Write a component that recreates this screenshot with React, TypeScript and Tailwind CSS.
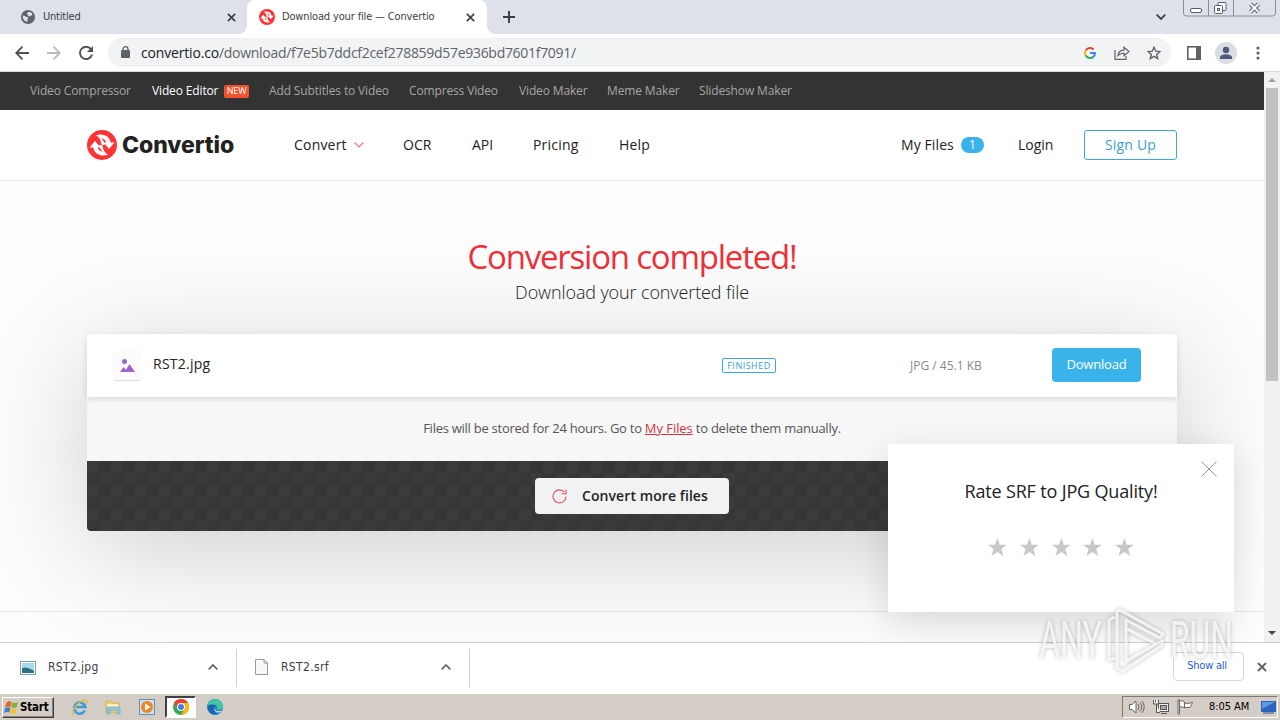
import type { ReactNode } from 'react';

const promoLinks = [
  { label: 'Video Compressor', width: 'w-[102px]' },
  { label: 'Video Editor', width: 'w-[97px]', isNew: true },
  { label: 'Add Subtitles to Video', width: 'w-[120px]' },
  { label: 'Compress Video', width: 'w-[90px]' },
  { label: 'Video Maker', width: 'w-[68px]' },
  { label: 'Meme Maker', width: 'w-[72px]' },
  { label: 'Slideshow Maker', width: 'w-[93px]' },
];

function CloseIcon({ className }: { className: string }) {
  return (
    <svg viewBox="0 0 10 10" className={className} fill="none" stroke="currentColor" strokeWidth="1.9">
      <path d="M1 1l8 8M9 1L1 9" />
    </svg>
  );
}

function ConvertioMark({ className }: { className: string }) {
  const arrow = 'M9 5.200C16 3 22.500 6 23.800 12.500H27.500L22 19 16.500 12.500H19.300C18.500 10 16.500 8.500 14 8.200c2.500 2 3.600 4.200 3.600 7l-3.200-.7C14.200 10.500 12.500 7.500 9 5.200z';
  return (
    <svg viewBox="0 0 30 30" className={className}>
      <circle cx="15" cy="15" r="15" fill="#ff3333" />
      <path fill="#fff" d={arrow} />
      <path fill="#fff" d={arrow} transform="rotate(180 15 15)" />
    </svg>
  );
}

function TabStrip() {
  return (
    <div className="flex h-[34px] shrink-0 bg-[#dee1e9] font-['DejaVu_Sans_Condensed','DejaVu_Sans',sans-serif] text-[11px] text-[#3c4043]">
      <div className="flex w-[247px] items-center pl-[21px] pr-[11px]">
        <svg viewBox="0 0 14 14" className="size-[14px]">
          <circle cx="7" cy="7" r="7" fill="#5f6368" />
          <path fill="#dee1e9" d="M2 5.500c2 .1 2.500 1.500 4 1.500 1.200 0 1.500 1 .9 1.700-.8.700 0 1.300-.4 3C3.500 11.800 1.300 8.800 2 5.500zM7 2.300c1.500-.8 3.800.3 4.600 1.900-.8.300-.6 1.500-1.700 1.500-.7 0-.8 1-1.800.7C6.900 6 7.500 5 6.500 4.600 5.600 4.200 6 2.800 7 2.300z" />
        </svg>
        <span className="ml-[8px] grow whitespace-nowrap tracking-[-0.200px]">Untitled</span>
        <CloseIcon className="size-[9px]" />
      </div>
      <div className="relative flex w-[240px] items-center rounded-t-[8px] bg-white pl-[12px] pr-[12px]">
        <div className="absolute bottom-0 -left-[8px] size-[8px] bg-[radial-gradient(circle_at_0_0,transparent_7.500px,white_8px)]" />
        <div className="absolute bottom-0 -right-[8px] size-[8px] bg-[radial-gradient(circle_at_100%_0,transparent_7.500px,white_8px)]" />
        <ConvertioMark className="size-4" />
        <span className="ml-[7px] grow whitespace-nowrap tracking-[-0.150px]">Download your file — Convertio</span>
        <CloseIcon className="size-[9px]" />
      </div>
      <div className="flex grow items-center pl-[16px]">
        <svg viewBox="0 0 12 12" className="size-3" stroke="#3c4043" strokeWidth="2">
          <path d="M6 0v12M0 6h12" />
        </svg>
      </div>
      <div className="flex items-center pr-[17px]">
        <svg viewBox="0 0 10 6" className="size-[10px]" fill="none" stroke="#3c4043" strokeWidth="1.800">
          <path d="M.7.700L5 5 9.300.700" />
        </svg>
      </div>
      <svg viewBox="0 0 93 17" className="mr-1 h-[17px] w-[93px]" fill="none" stroke="#8a8e96">
        <path d="M.5 0v13q0 3 3 3h86q3 0 3-3V0M25.500 0v16M50.500 0v16" />
        <g stroke="#555b66">
          <rect x="7.500" y="8.500" width="11" height="4" rx="1.500" fill="#fff" />
          <rect x="35" y="2.500" width="8" height="8" rx="1" fill="#fff" />
          <rect x="31.500" y="5.500" width="8" height="8" rx="1" fill="#fff" />
          <rect x="34.500" y="8.500" width="2" height="2" />
        </g>
        <path d="M67.500 4l8 8M75.500 4l-8 8" stroke="#555b66" strokeWidth="4" />
        <path d="M67.500 4l8 8M75.500 4l-8 8" stroke="#fff" strokeWidth="2" />
      </svg>
    </div>
  );
}

function Toolbar() {
  return (
    <div className="flex h-[38px] shrink-0 items-center border-b border-[#d5d7da] bg-white">
      <svg viewBox="0 0 14 14" className="ml-[15px] size-[14px]" fill="none" stroke="#4d5156" strokeWidth="1.800">
        <path d="M14 7H1.500M7.500.7L1.200 7l6.300 6.300" />
      </svg>
      <svg viewBox="0 0 14 14" className="ml-[18px] size-[14px]" fill="none" stroke="#b9bbbe" strokeWidth="1.800">
        <path d="M0 7h12.500M6.500.7L12.800 7l-6.300 6.300" />
      </svg>
      <svg viewBox="0 0 14 14" className="ml-[18px] size-[14px]" fill="none" stroke="#4d5156" strokeWidth="1.900">
        <path d="M12.300 3.700A6.100 6.100 0 1 0 13 8.500" />
        <path d="M14 0v6H8z" fill="#4d5156" stroke="none" />
      </svg>
      <div className="ml-[15px] flex h-[29px] w-[1063px] items-center rounded-full bg-[#f1f3f4] pl-[13px] pr-[10px]">
        <svg viewBox="0 0 9 12" className="mb-[2px] h-[12px] w-[9px]">
          <rect y="4" width="9" height="8" rx="1" fill="#5f6368" />
          <path d="M2 5V3.200a2.500 2.500 0 0 1 5 0V5" fill="none" stroke="#5f6368" strokeWidth="1.300" />
        </svg>
        <div className="ml-[11px] grow whitespace-nowrap font-['Open_Sans',sans-serif] text-[14px] text-[#5f6368]">
          <span className="tracking-[-0.170px] text-[#202124]">convertio.co</span>
          <span className="tracking-[-0.300px]">/download/f7e5b7ddcf2cef278859d57e936bd7601f7091/</span>
        </div>
        <svg viewBox="0 0 12 12" className="size-[12px]" fill="none" strokeWidth="2">
          <path d="M1.700 3.500A5 5 0 0 1 9.600 2.500" stroke="#ea4335" />
          <path d="M1.700 3.500a5 5 0 0 0 0 5" stroke="#fbbc05" />
          <path d="M1.700 8.500a5 5 0 0 0 7.500 1.400" stroke="#34a853" />
          <path d="M9.200 9.900A5 5 0 0 0 11 6H6" stroke="#4285f4" />
        </svg>
        <svg viewBox="0 0 16 14" className="ml-[18px] h-[14px] w-[16px]" fill="none" stroke="#5f6368" strokeWidth="1.200">
          <path d="M1 4v9.400h11V10" />
          <path d="M4 9.500c.4-3.700 2.700-5.300 6-5.300V1.200l5 4.300-5 4.300V7.200C7.500 7.200 5.500 7.800 4 9.500z" />
        </svg>
        <svg viewBox="0 0 14 14" className="ml-[17px] size-[14px]" fill="none" stroke="#5f6368" strokeWidth="1.400">
          <path d="M7 1.300l1.700 3.900 4.200.4-3.200 2.800 1 4.200L7 10.400l-3.700 2.200 1-4.200L1.100 5.600l4.200-.4z" />
        </svg>
      </div>
      <svg viewBox="0 0 14 14" className="ml-[16px] size-[14px]">
        <rect x=".8" y=".8" width="12.400" height="12.400" fill="none" stroke="#5f6368" strokeWidth="1.600" />
        <rect x="9" y="1" width="4.500" height="12" fill="#5f6368" />
      </svg>
      <svg viewBox="0 0 22 22" className="ml-[14px] size-[22px]">
        <circle cx="11" cy="11" r="11" fill="#dadde2" />
        <circle cx="11" cy="8" r="3.200" fill="#4d5b7c" />
        <path d="M5 17v-1.500c0-2.200 3.500-3.300 6-3.300s6 1.100 6 3.300V17z" fill="#4d5b7c" />
      </svg>
      <svg viewBox="0 0 4 14" className="ml-[19px] h-[14px] w-[4px]" fill="#5f6368">
        <circle cx="2" cy="2" r="1.600" />
        <circle cx="2" cy="7" r="1.600" />
        <circle cx="2" cy="12" r="1.600" />
      </svg>
    </div>
  );
}

function PromoBar() {
  return (
    <nav className="flex h-[38px] shrink-0 items-center gap-5 bg-[#333] pl-[30px] text-[12px] text-[#a6a6a6]">
      {promoLinks.map((link) => (
        <a key={link.label} className={`${link.width} flex items-center whitespace-nowrap tracking-[-0.140px]`}>
          {link.isNew ? (
            <>
              <span className="w-[72px] text-white">{link.label}</span>
              <span className="flex h-[13px] w-[25px] shrink-0 items-center justify-center rounded-[2px] bg-[#f0532d] text-[9px] text-white">
                NEW
              </span>
            </>
          ) : (
            link.label
          )}
        </a>
      ))}
    </nav>
  );
}

function SiteHeader() {
  return (
    <header className="flex h-[71px] shrink-0 items-center border-b border-[#ebebeb] bg-white pl-[87px] text-[14px] text-[#222]">
      <ConvertioMark className="size-[30px]" />
      <span className="ml-[5px] w-[172px] font-['Inter',sans-serif] text-[23px] leading-none font-extrabold tracking-[-0.070px] text-[#222]">
        Convertio
      </span>
      <span className="mb-[2px] w-[60px] tracking-[0.200px]">Convert</span>
      <svg viewBox="0 0 10 6" className="mr-[39px] h-[6px] w-[10px]" fill="none" stroke="#f07878" strokeWidth="1.200">
        <path d="M.5.500L5 5 9.500.500" />
      </svg>
      <span className="mb-[2px] w-[69px]">OCR</span>
      <span className="mb-[2px] w-[61px]">API</span>
      <span className="mb-[2px] w-[86px] tracking-[0.200px]">Pricing</span>
      <span className="mb-[2px] w-[282px] tracking-[0.200px]">Help</span>
      <span className="mb-[2px] w-[60px] tracking-[0.100px]">My Files</span>
      <span className="flex h-4 w-[23px] items-center justify-center rounded-full bg-[#3ab3ea] text-[12px] text-white">1</span>
      <span className="mb-[2px] ml-[34px] w-[66px]">Login</span>
      <button className="h-[30px] w-[93px] rounded-[3px] border border-[#3ba9dc] pb-[2px] tracking-[0.200px] text-[#3ba0d0]">Sign Up</button>
    </header>
  );
}

function ResultCard() {
  return (
    <section className="mx-[87px] mt-[29px] w-[1090px] rounded-[4px] shadow-[0_20px_110px_rgba(0,0,0,0.190)]">
      <div className="relative flex h-[63px] items-center rounded-t-[4px] bg-white pl-[26px] shadow-[0_2px_6px_rgba(0,0,0,0.130)]">
        <div className="flex h-[30px] w-[28px] items-center justify-center rounded-[3px] border-b border-[#ddd] bg-[#fbfbfb] shadow-[0_0_1px_rgba(0,0,0,0.080)]">
          <svg viewBox="0 0 15 13" className="mt-[1px] h-[13px] w-[15px]" fill="#9c64d2">
            <circle cx="4.500" cy="2.500" r="2.500" />
            <path d="M0 13l3.500-5L6 10.800 9.500 5l5.500 8z" />
          </svg>
        </div>
        <span className="mb-[4px] ml-[12px] w-[569px] text-[14px] tracking-[0.250px] text-[#222]">RST2.jpg</span>
        <span className="flex h-[15px] w-[54px] items-center justify-center rounded-[2px] border border-[#3ba9dc] text-[9px] tracking-[0.500px] text-[#3ba0d0]">
          FINISHED
        </span>
        <span className="ml-[134px] w-[142px] text-[12px] text-[#888]">JPG / 45.1 KB</span>
        <button className="mt-[-1px] h-[34px] w-[89px] rounded-[4px] bg-[#3ab3ea] text-[13px] tracking-[-0.200px] text-white">Download</button>
      </div>
      <p className="flex h-[64px] items-center justify-center bg-[#f7f7f7] text-[13px] tracking-[-0.260px] whitespace-pre text-[#555]">
        Files will be stored for 24 hours. Go to <a className="tracking-[-0.060px] text-[#d63341] underline">My Files</a> to delete them manually.
      </p>
      <div className="flex h-[70px] items-center justify-center rounded-b-[4px] bg-[repeating-conic-gradient(#363636_0_25%,#3b3b3b_0_50%)] bg-[length:24px_24px]">
        <button className="flex h-[36px] w-[194px] items-center rounded-[4px] bg-[#f2f2f2] pl-[17px] text-[14px] font-semibold text-[#222]">
          <svg viewBox="0 0 15 15" className="mr-[15px] size-[15px]" fill="none" stroke="#e25560" strokeWidth="1.100">
            <path d="M14 7.500A6.500 6.500 0 1 1 12.500 3.200M14 .5v4.300H9.500" />
          </svg>
          <span className="mb-[2px] tracking-[0.080px]">Convert more files</span>
        </button>
      </div>
    </section>
  );
}

function RatingPopup() {
  return (
    <div className="absolute top-[372px] left-[888px] flex h-[168px] w-[346px] flex-col items-center bg-white pt-[32px] shadow-[0_10px_36px_rgba(0,0,0,0.130)]">
      <svg viewBox="0 0 16 16" className="absolute top-[17px] right-[17px] size-4" stroke="#999" strokeWidth="1">
        <path d="M.5.500l15 15M15.500.500l-15 15" />
      </svg>
      <h2 className="text-[18px] leading-[30px] tracking-[-0.160px] whitespace-nowrap text-[#222]">Rate SRF to JPG Quality!</h2>
      <div className="mt-[32px] flex gap-[13px]">
        {[1, 2, 3, 4, 5].map((star) => (
          <svg key={star} viewBox="0 0 18 18" className="h-[19px] w-[18.750px]" fill="#c8c8c8">
            <path d="M9 0l2.300 6.300H18l-5.300 4.100 2 6.800L9 13.300l-5.700 3.900 2-6.800L0 6.300h6.700z" />
          </svg>
        ))}
      </div>
    </div>
  );
}

function Scrollbar() {
  return (
    <div className="flex w-4 shrink-0 flex-col items-center bg-[#f1f1f1]">
      <div className="flex h-4 items-center">
        <svg viewBox="0 0 8 4" className="h-1 w-2" fill="#a0a0a0">
          <path d="M0 4l4-4 4 4z" />
        </svg>
      </div>
      <div className="h-[293px] w-[12px] bg-[#c1c1c1]" />
      <div className="grow" />
      <div className="flex h-[18px] items-center">
        <svg viewBox="0 0 8 4" className="h-1 w-2" fill="#444">
          <path d="M0 0h8L4 4z" />
        </svg>
      </div>
    </div>
  );
}

function DownloadItem({ name, icon }: { name: string; icon: ReactNode }) {
  return (
    <div className="flex h-[38px] items-center border-r border-[#d0d3d7] pr-[18px] text-[12px] text-[#3c4043]">
      {icon}
      <span className="mb-[2px] grow tracking-[0.350px]">{name}</span>
      <svg viewBox="0 0 10 6" className="mb-[2px] h-[6px] w-[10px]" fill="none" stroke="#5f6368" strokeWidth="1.700">
        <path d="M.7 5.300L5 1l4.300 4.300" />
      </svg>
    </div>
  );
}

function DownloadShelf() {
  return (
    <div className="flex h-[51px] shrink-0 items-center border-t border-[#cfcfcf] bg-white font-['DejaVu_Sans_Condensed','DejaVu_Sans',sans-serif]">
      <div className="grid grid-cols-[237px_233px]">
        <DownloadItem
          name="RST2.jpg"
          icon={
            <svg viewBox="0 0 16 14" className="mr-[12px] ml-[20px] h-[14px] w-4">
              <rect x=".5" y=".5" width="15" height="13" fill="#fff" stroke="#7f9bb5" />
              <path d="M2 2h12v10H2z" fill="#a8d8f0" />
              <path d="M2 7q5-2 12 3v2H2z" fill="#2d7470" />
              <path d="M2 10q5-1 12 1v1H2z" fill="#2d6da8" />
            </svg>
          }
        />
        <DownloadItem
          name="RST2.srf"
          icon={
            <svg viewBox="0 0 13 16" className="mr-[13px] ml-[18px] mb-[2px] h-4 w-[13px]" fill="#f8f8f8" stroke="#989898">
              <path d="M.5.500h8.500l3.500 3.500v11.500H.5zM9 .5V4h3.500" />
            </svg>
          }
        />
      </div>
      <div className="grow" />
      <button className="mr-[13px] mb-[3px] h-[29px] w-[71px] rounded-[4px] border border-[#d5d8dc] pr-[3px] text-[11px] tracking-[-0.250px] text-[#1a62c5]">Show all</button>
      <CloseIcon className="mr-[13px] mb-[2px] size-[10px] text-[#5f6368]" />
    </div>
  );
}

function Taskbar() {
  return (
    <div className="flex h-[27px] shrink-0 items-center border-t border-white bg-[#d4cdc5] pl-[2px] font-['DejaVu_Sans_Condensed','DejaVu_Sans',sans-serif] text-[11px] text-black">
      <button className="flex h-[21px] w-[52px] items-center border border-t-white border-r-[#404040] border-b-[#404040] border-l-white pt-[1px] pl-[1px] text-[11.500px] font-bold tracking-[-0.200px] shadow-[inset_-1px_-1px_#87827b]">
        <svg viewBox="0 0 16 15" className="mr-[1px] size-[15px] shrink-0">
          <path d="M2.500 2.500Q5 0 8 1.500L7 7Q4 5.500 1 7.500z" fill="#e8622b" />
          <path d="M8.700 2Q12 3.500 15 1.500L13.500 7Q11 9 7.700 7.300z" fill="#7fb53b" />
          <path d="M1 8.300Q4 6.300 6.800 7.800L5.500 13Q3 11.500 0 13.500z" fill="#3c80d0" />
          <path d="M7.500 8.200Q11 10 13.300 8L12 13.500Q9 15.500 6 13.700z" fill="#f5c32c" />
        </svg>
        Start
      </button>
      <svg viewBox="0 0 16 16" className="ml-[17px] size-[17px]" fill="none">
        <path d="M13 11a5.300 5.300 0 1 1 .5-3.500H4" stroke="#3b9de0" strokeWidth="2.500" />
        <path d="M1.500 14.500C-.5 11.500 9-.5 14.500 1.500c1.200.6.5 2-.3 3" stroke="#e4bb3d" strokeWidth="1.300" />
      </svg>
      <svg viewBox="0 0 16 16" className="ml-[17px] size-[16px]">
        <path d="M1 2h6l1 2h6v10H1z" fill="#eccb6b" stroke="#c9a548" strokeWidth=".6" />
        <path d="M2 5h11v3H2z" fill="#fff2b8" />
        <path d="M2 15V9.500Q2 8 4 8h8q3 0 3 2v5h-3v-4H5v4z" fill="#8ecbe8" stroke="#579bbd" strokeWidth=".6" />
      </svg>
      <svg viewBox="0 0 16 16" className="ml-[18px] size-[16px]">
        <rect x=".5" y=".5" width="15" height="15" fill="#cfe0ee" stroke="#6590b8" />
        <circle cx="8" cy="8" r="6" fill="#ee8522" />
        <path d="M6 4.500L11.500 8 6 11.500z" fill="#fff" />
      </svg>
      <div className="ml-[10px] flex h-[22px] w-[31px] items-center justify-center border-2 border-t-[#404040] border-r-white border-b-white border-l-[#404040] bg-white">
        <svg viewBox="0 0 16 16" className="size-4">
          <circle cx="8" cy="8" r="8" fill="#34a853" />
          <path d="M1.070 4A8 8 0 0 1 14.930 4L8 8 4.500 10z" fill="#ea4335" />
          <path d="M14.930 4A8 8 0 0 1 8 16l3.500-6L8 4z" fill="#fbbc05" />
          <circle cx="8" cy="8" r="4" fill="#fff" />
          <circle cx="8" cy="8" r="3" fill="#3f7fe8" />
        </svg>
      </div>
      <svg viewBox="0 0 16 16" className="ml-[11px] size-4">
        <circle cx="8" cy="8" r="8" fill="#1687cf" />
        <path d="M.5 6C3-1 13-2 16 6c.5 4-3 5.500-6.500 4.500C12 7.500 9 4 .5 6z" fill="#43c7a1" />
        <path d="M9 7c-3 3 0 6.500 6 4.500l-1 1.500c-5 2-9-2-5-6z" fill="#d4cdc5" />
        <path d="M1 7c4-3 8-1 8 0-3 1-3 5 1 8.500C4 16 0 12 1 7z" fill="#1b62b5" />
      </svg>
      <div className="grow" />
      <div className="mr-[2px] flex h-[22px] w-[156px] items-center border border-t-[#7e7972] border-r-white border-b-white border-l-[#7e7972] pl-[6px]">
        <svg viewBox="0 0 16 14" className="h-[14px] w-4" fill="#fff" stroke="#666" strokeWidth="1">
          <path d="M.5 4.500H3l4-3.500v12L3 9.500H.5z" />
          <path d="M9 4q2 3 0 6M11 2.500q3.500 4.500 0 9M13 1q4.500 6 0 12" fill="none" />
        </svg>
        <svg viewBox="0 0 16 16" className="ml-[8px] size-4" fill="#eee" stroke="#555" strokeWidth="1">
          <rect x="5.500" y="4.500" width="10" height="8" />
          <rect x="7.500" y="6.500" width="6" height="4" fill="#aaa" />
          <path d="M.5 1v4h5V1M2.500 1v2M3.500 5v8.500H7M8 14.500h6" />
        </svg>
        <svg viewBox="0 0 16 16" className="ml-[8px] size-4" fill="#f8f8f8" stroke="#666" strokeWidth="1">
          <path d="M1 1v14h1.500V1zM2.500 2q3-1 5 1v6q-2-2-5-1zM7.500 4q3 1 8-.5-1 4-3 5H7.500z" />
        </svg>
        <span className="mt-[1px] ml-[16px] w-[52px] whitespace-nowrap tracking-[-0.050px]">8:05 AM</span>
        <svg viewBox="0 0 15 13" className="h-[13px] w-[15px]">
          <rect width="15" height="11" fill="#2b63bd" />
          <path d="M1 1h13L1 8z" fill="#5d99df" />
          <path d="M2 12h11" stroke="#35507a" />
        </svg>
      </div>
    </div>
  );
}

function Watermark() {
  return (
    <svg
      viewBox="0 0 200 74"
      className="pointer-events-none absolute top-[604px] left-[1036px] h-[74px] w-[200px] overflow-visible fill-white/75 font-['Roboto',sans-serif] text-[51px] font-normal drop-shadow-[0_0_2px_rgba(0,0,0,0.350)]"
    >
      <text x="3" y="54" textLength="63" lengthAdjust="spacingAndGlyphs">ANY</text>
      <text x="134" y="54" textLength="63" lengthAdjust="spacingAndGlyphs">RUN</text>
      <g fill="none" stroke="#fff" strokeOpacity=".75" strokeWidth="3" strokeLinejoin="round">
        <path d="M84 6l43 24-3 4-34-18v41l36-20v4L87 67l-6-3V7z" />
        <path d="M79 13l-6 3v40l6-2M91 25l29 15" />
      </g>
    </svg>
  );
}

export default function App() {
  return (
    <div className="relative flex h-[720px] w-[1280px] flex-col overflow-hidden bg-white">
      <TabStrip />
      <Toolbar />
      <div className="relative flex h-[570px] shrink-0 overflow-hidden font-['Open_Sans',sans-serif]">
        <div className="flex w-[1264px] flex-col overflow-hidden bg-[#fdfdfd]">
          <PromoBar />
          <SiteHeader />
          <main className="flex h-[431px] shrink-0 flex-col border-b border-[#e8e8e8]">
            <h1 className="mt-[54px] text-center text-[33px] leading-[44px] tracking-[-1.220px] text-[#f03038]">Conversion completed!</h1>
            <p className="text-center text-[18px] leading-[26px] font-light tracking-[-0.120px] text-[#222]">Download your converted file</p>
            <ResultCard />
          </main>
        </div>
        <Scrollbar />
        <RatingPopup />
      </div>
      <DownloadShelf />
      <Taskbar />
      <Watermark />
    </div>
  );
}
